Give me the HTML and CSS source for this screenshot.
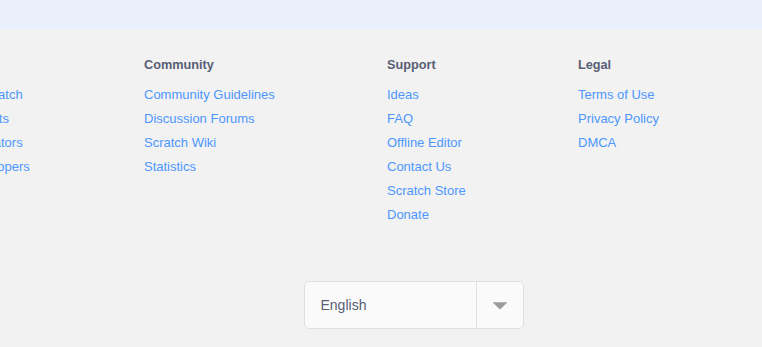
FILE: index.html
```html
<!DOCTYPE html>
<html>
<head>
<meta charset="utf-8">
<link rel="stylesheet" href="styles.css">
</head>
<body>
<div class="band"></div>
<footer class="footer">
  <div class="lists">
    <dl class="col col-about">
      <dt>About</dt>
      <dd><a href="#">About Scratch</a></dd>
      <dd><a href="#">For Parents</a></dd>
      <dd><a href="#">For Educators</a></dd>
      <dd><a href="#">For Developers</a></dd>
    </dl>
    <dl class="col col-community">
      <dt>Community</dt>
      <dd><a href="#">Community Guidelines</a></dd>
      <dd><a href="#">Discussion Forums</a></dd>
      <dd><a href="#">Scratch Wiki</a></dd>
      <dd><a href="#">Statistics</a></dd>
    </dl>
    <dl class="col col-support">
      <dt>Support</dt>
      <dd><a href="#">Ideas</a></dd>
      <dd><a href="#">FAQ</a></dd>
      <dd><a href="#">Offline Editor</a></dd>
      <dd><a href="#">Contact Us</a></dd>
      <dd><a href="#">Scratch Store</a></dd>
      <dd><a href="#">Donate</a></dd>
    </dl>
    <dl class="col col-legal">
      <dt>Legal</dt>
      <dd><a href="#">Terms of Use</a></dd>
      <dd><a href="#">Privacy Policy</a></dd>
      <dd><a href="#">DMCA</a></dd>
    </dl>
  </div>
  <div class="language">
    <div class="select">
      <span class="select-label">English</span>
      <span class="select-arrow">
        <svg width="16" height="9" viewBox="0 0 16 9"><path d="M1.5 1.2 H14.5 Q15.4 1.2 14.8 2 L8.8 7.8 Q8 8.5 7.2 7.8 L1.2 2 Q0.6 1.2 1.5 1.2 Z" fill="#9c9c9c"/></svg>
      </span>
    </div>
  </div>
</footer>
</body>
</html>
```

FILE: styles.css
```css
html, body {
  margin: 0;
  padding: 0;
  background: #f2f2f2;
  font-family: "Liberation Sans", Arial, Helvetica, sans-serif;
  overflow: hidden;
}

.band {
  height: 29px;
  background: #e9f0fc;
}

.footer {
  background: #f2f2f2;
  padding-top: 24px;
}

.lists {
  display: flex;
  margin-left: -59px;
}

.col {
  margin: 0;
  padding: 0;
  flex: none;
}

.col-about { width: 203px; }
.col-community { width: 243px; }
.col-support { width: 191px; }
.col-legal { width: 180px; }

.col dt {
  font-size: 12.7px;
  font-weight: bold;
  color: #575e75;
  line-height: 24px;
  margin-bottom: 6px;
}

.col dd {
  margin: 0;
  font-size: 13px;
  line-height: 24px;
}

.col a {
  color: #4d97ff;
  text-decoration: none;
}

.language {
  display: flex;
  justify-content: center;
  padding-top: 54px;
  padding-left: 65px;
}

.select {
  display: flex;
  width: 218px;
  height: 46px;
  border: 1px solid #dfdfdf;
  border-radius: 5px;
  background: #fafafa;
}

.select-label {
  flex: 1;
  display: flex;
  align-items: center;
  padding-left: 16px;
  font-size: 14px;
  color: #575e75;
}

.select-arrow {
  width: 46px;
  border-left: 1px solid #dfdfdf;
  display: flex;
  align-items: center;
  justify-content: center;
}

.select-arrow svg {
  display: block;
}
```
